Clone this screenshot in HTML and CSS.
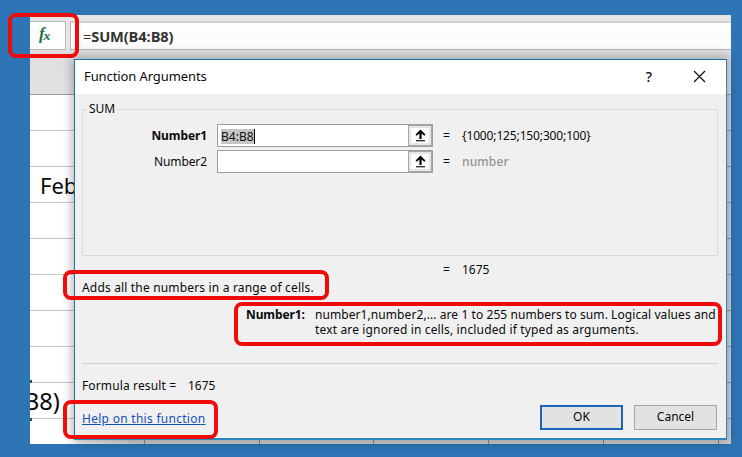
FILE: index.html
```html
<!DOCTYPE html>
<html lang="en">
<head>
<meta charset="utf-8">
<title>Function Arguments</title>
<link rel="stylesheet" href="styles.css">
</head>
<body>
<div class="stage">
  <main class="sheet">
    <div class="formula-bar">
      <div class="fx"><span>f<small>x</small></span></div>
      <div class="formula"><span class="t-eq">=</span><span>SUM(B4:B8)</span></div>
    </div>
    <div class="column-head"></div>
    <div class="rows">
      <div class="row"></div>
      <div class="row"></div>
      <div class="row"><span class="feb">Feb</span></div>
      <div class="row"></div>
      <div class="row"></div>
      <div class="row"></div>
      <div class="row"></div>
      <div class="row"></div>
      <div class="row active"><span class="ref">B8)</span></div>
      <div class="row last"></div>
    </div>
    <div class="right-edge"></div>
    <div class="bottom-edge"></div>
    <i class="handle handle-top"></i>
    <i class="handle handle-bottom"></i>
  </main>

  <section class="dialog">
    <header class="title">
      <span class="t-title">Function Arguments</span>
      <span class="help-mark">?</span>
      <svg class="close" width="13" height="13" viewBox="0 0 13 13"><path d="M1 1L12 12M12 1L1 12" fill="none" stroke="#111" stroke-width="1.3"/></svg>
    </header>
    <div class="content">
      <fieldset class="group">
        <legend>SUM</legend>
        <div class="arg">
          <label class="t-bold">Number1</label>
          <div class="input"><span class="text"><mark>B4:B8</mark></span><span class="pick"><svg width="11" height="13" viewBox="0 0 11 13"><path d="M5.5 .5L10.2 5.2V6.6H9L6.6 4.4V10H4.4V4.4L2 6.6H.8V5.2Z"/><path d="M1 11.2H10V12.3H1Z"/></svg></span></div>
          <span class="eq">=</span><span class="value t-array">{1000;125;150;300;100}</span>
        </div>
        <div class="arg">
          <label class="t-plain">Number2</label>
          <div class="input"><span class="text"></span><span class="pick"><svg width="11" height="13" viewBox="0 0 11 13"><path d="M5.5 .5L10.2 5.2V6.6H9L6.6 4.4V10H4.4V4.4L2 6.6H.8V5.2Z"/><path d="M1 11.2H10V12.3H1Z"/></svg></span></div>
          <span class="eq">=</span><span class="value muted">number</span>
        </div>
      </fieldset>
      <div class="result"><span class="eq">=</span><span class="value">1675</span></div>
      <p class="summary">Adds all the numbers in a range of cells.</p>
      <div class="detail">
        <b>Number1:</b>
        <div><p class="line-a">number1,number2,... are 1 to 255 numbers to sum. Logical values and</p><p class="line-b">text are ignored in cells, included if typed as arguments.</p></div>
      </div>
      <footer class="foot">
        <div class="foot-left">
          <div class="formula-result"><span class="t-result">Formula result =</span><span>1675</span></div>
          <a class="link">Help on this function</a>
        </div>
        <div class="buttons"><span class="btn primary">OK</span><span class="btn">Cancel</span></div>
      </footer>
    </div>
  </section>

  <div class="mark mark-fx"></div>
  <div class="mark mark-summary"></div>
  <div class="mark mark-detail"></div>
  <div class="mark mark-help"></div>
</div>
</body>
</html>
```

FILE: styles.css
```css
* { box-sizing: border-box; }
body { margin: 0; font: 12px/15px "Noto Sans", "Open Sans", sans-serif; color: #0a0a0a; }
p { margin: 0; }
.stage { position: relative; width: 742px; height: 457px; padding: 15px 11px 13px 30px; background: #2e75b6; overflow: hidden; white-space: nowrap; }

.sheet { position: relative; width: 701px; height: 429px; background: #fff; overflow: hidden; }
.formula-bar { display: flex; gap: 4px; height: 35px; padding-top: 6px; background: #e6e6e6; }
.fx { width: 36px; height: 29px; border: 1px solid #bcbcbc; border-left: 0; background: #fdfdfd; padding-left: 9px; font: italic bold 17px/24px "Liberation Serif", serif; color: #217346; }
.fx small { display: inline-block; font-size: 12px; line-height: 12px; margin-left: -1px; transform: translateY(1px) scaleX(1.15); }
.formula { flex: 1; height: 29px; border: 1px solid #b4b4b4; border-top: 2px solid #cfcfcf; border-right: 0; background: linear-gradient(#fff, #fafafa); padding-left: 12px; font: bold 14.6px/26px "Open Sans", sans-serif; letter-spacing: -.1px; color: #333; }
.t-eq { font-weight: 400; }
.column-head { height: 45px; border-bottom: 1px solid #999; background: linear-gradient(#dedede, #e3e3e3); }
.row { height: 36px; border-bottom: 1px solid #c6c6c6; overflow: hidden; font: 23px/35px "Noto Sans", sans-serif; }
.row.last { border: 0; }
.feb { display: block; padding-left: 10px; font-size: 22px; line-height: 37px; }
.ref { display: block; margin-left: -6px; font-size: 23.5px; line-height: 37px; }
.handle { position: absolute; left: 0; width: 2px; height: 3px; background: #1d5c3a; }
.handle-top { top: 365px; }
.handle-bottom { top: 403px; }
.right-edge { position: absolute; left: 697px; top: 80px; width: 4px; height: 349px; background: repeating-linear-gradient(#c9d6df 0 35px, #8d9aa3 35px 36px); }
.bottom-edge { position: absolute; left: 46px; top: 424px; width: 655px; height: 5px; background: repeating-linear-gradient(90deg, transparent 0 113.8px, #858585 113.8px 114.8px) -46px 0 / 800px 100% no-repeat, linear-gradient(90deg, #f8f8f8, #d0d0d0 60px); }

.dialog { position: absolute; left: 74px; top: 59px; width: 653px; height: 381px; background: #f0f0f0; border: 1px solid #1f70ae; border-right-color: #3484a6; border-bottom: 2px solid #278abb; box-shadow: 0 0 10px 2px rgba(0,0,0,.28); }
.title { display: flex; align-items: center; height: 34px; padding: 0 20px 2px 9px; background: #fff; font-size: 13px; }
.t-title { letter-spacing: -.1px; }
.help-mark { margin-left: auto; margin-right: 41px; font-size: 14px; font-weight: 500; }
.close { display: block; }
.content { padding: 8px 8px 0 7px; }
.group { height: 154px; margin: 0; padding: 8px 0 0; border: 1px solid #dadada; min-width: 0; }
.group legend { margin-left: 4px; padding: 0 2px; height: 14px; line-height: 14px; }
.arg { display: flex; align-items: center; height: 23px; margin-bottom: 3px; }
.arg label { width: 124px; text-align: right; margin-right: 10px; }
.t-bold { font-weight: bold; letter-spacing: -.1px; }
.t-plain { letter-spacing: -.1px; }
.t-array { letter-spacing: -.14px; }
.input { display: flex; width: 216px; height: 23px; border: 1px solid #9e9e9e; background: #fff; }
.input .text { flex: 1; padding: 4px 0 0 3px; }
mark { display: inline-block; height: 15px; background: #c6c6c6; color: #111; border-right: 1px solid #000; }
.pick { display: flex; align-items: center; justify-content: center; width: 24px; border: 1px solid #a8a8a8; background: #fff; box-shadow: inset 0 0 0 2px #e6e6e6; }
.eq { width: 19px; margin-left: 10px; font-weight: 500; }
.muted { color: #949494; font-weight: 500; letter-spacing: .15px; }
.result { display: flex; margin-top: 6px; padding-left: 351px; }
.summary { margin-top: 3px; letter-spacing: .17px; }
.detail { display: flex; margin: 12px 0 0 164px; }
.detail b { width: 69px; letter-spacing: -.1px; }
.line-a { letter-spacing: .075px; }
.line-b { letter-spacing: .15px; }
.foot { display: flex; justify-content: space-between; margin-top: 26px; height: 70px; border-top: 1px solid #d2d2d2; }
.foot-left { padding-top: 14px; }
.formula-result { display: flex; }
.t-result { width: 106px; letter-spacing: .13px; }
.link { display: block; margin-top: 18px; letter-spacing: .28px; color: #1450b8; text-decoration: underline; text-underline-offset: 1px; }
.buttons { display: flex; gap: 11px; padding: 41px 1px 0 0; }
.btn { width: 83px; height: 25px; border: 1px solid #a6a6a6; background: #e2e2e2; text-align: center; line-height: 22px; }
.btn.primary { border: 2px solid #1b65bd; line-height: 20px; }

.mark { position: absolute; border: 4px solid #f00b0b; border-radius: 8px; }
.mark-fx { left: 8px; top: 13px; width: 71px; height: 45px; }
.mark-summary { left: 63px; top: 270px; width: 266px; height: 30px; }
.mark-detail { left: 234px; top: 302px; width: 488px; height: 44px; }
.mark-help { left: 63px; top: 400px; width: 155px; height: 39px; }
```
